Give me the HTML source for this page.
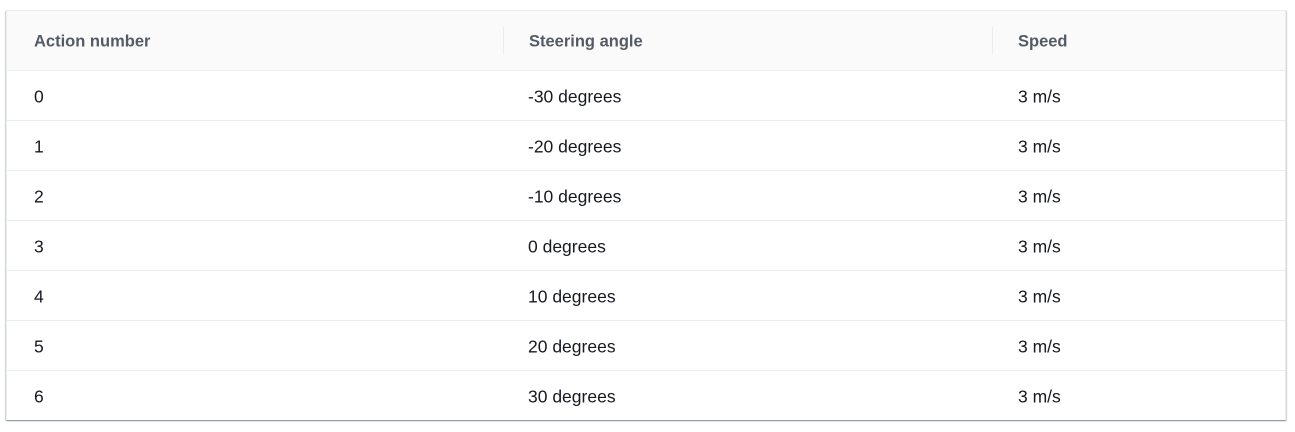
<!DOCTYPE html>
<html><head><style>
body{margin:0;background:#fff;font-family:"Liberation Sans",sans-serif;}
.t{position:absolute;left:6px;top:10px;width:1280px;height:410px;border:1px solid #eaeded;border-bottom:none;box-shadow:0 1px 1px 0 rgba(0,28,36,.3),1px 1px 1px 0 rgba(0,28,36,.15),-1px 1px 1px 0 rgba(0,28,36,.15);box-sizing:border-box;}
.h{position:absolute;left:0;top:0;width:100%;height:60px;background:#fafafa;border-bottom:1px solid #eaeded;box-sizing:border-box;font-weight:bold;color:#545b64;font-size:16.5px;}
.h span,.r span{position:absolute;top:50%;transform:translateY(-45%);}
.d{position:absolute;top:16px;height:28px;width:1px;background:#eaeded;}
.r{position:absolute;left:0;width:100%;height:50px;border-bottom:1px solid #eaeded;box-sizing:border-box;color:#16191f;font-size:17.5px;}
</style></head><body>
<div class="t">
<div class="h"><span style="left:27px">Action number</span><div class="d" style="left:496px"></div><span style="left:522px">Steering angle</span><div class="d" style="left:985px"></div><span style="left:1011px">Speed</span></div>
<div class="r" style="top:60px"><span style="left:27px">0</span><span style="left:521px">-30 degrees</span><span style="left:1011px">3 m/s</span></div>
<div class="r" style="top:110px"><span style="left:27px">1</span><span style="left:521px">-20 degrees</span><span style="left:1011px">3 m/s</span></div>
<div class="r" style="top:160px"><span style="left:27px">2</span><span style="left:521px">-10 degrees</span><span style="left:1011px">3 m/s</span></div>
<div class="r" style="top:210px"><span style="left:27px">3</span><span style="left:521px">0 degrees</span><span style="left:1011px">3 m/s</span></div>
<div class="r" style="top:260px"><span style="left:27px">4</span><span style="left:521px">10 degrees</span><span style="left:1011px">3 m/s</span></div>
<div class="r" style="top:310px"><span style="left:27px">5</span><span style="left:521px">20 degrees</span><span style="left:1011px">3 m/s</span></div>
<div class="r" style="top:360px;border-bottom:none"><span style="left:27px">6</span><span style="left:521px">30 degrees</span><span style="left:1011px">3 m/s</span></div>
</div>
</body></html>
